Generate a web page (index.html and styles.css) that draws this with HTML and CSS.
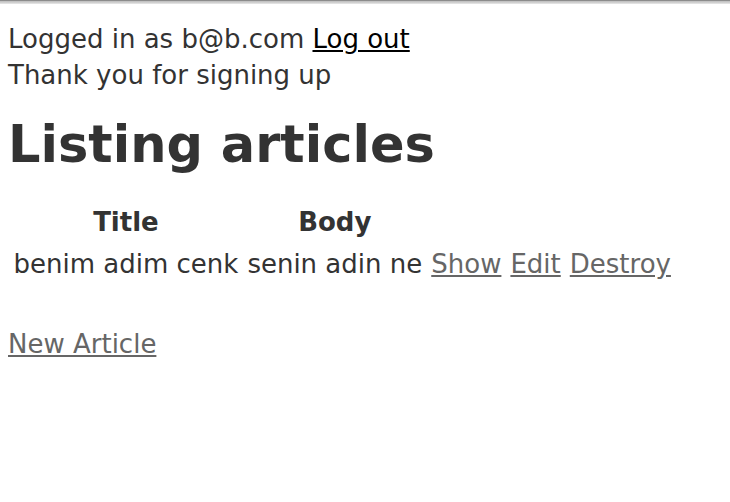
FILE: index.html
```html
<!DOCTYPE html>
<html>
<head>
<meta charset="utf-8">
<link rel="stylesheet" href="styles.css">
</head>
<body>
<div class="chrome"></div>
<div class="page">
  <div class="session">Logged in as b@b.com <a class="logout" href="#">Log out</a></div>
  <div class="notice">Thank you for signing up</div>
  <h1 class="title">Listing articles</h1>
  <table class="articles">
    <tr>
      <th>Title</th>
      <th>Body</th>
      <th></th>
      <th></th>
      <th></th>
    </tr>
    <tr>
      <td>benim adim cenk</td>
      <td>senin adin ne</td>
      <td><a class="visited" href="#">Show</a></td>
      <td><a class="visited" href="#">Edit</a></td>
      <td><a class="visited" href="#">Destroy</a></td>
    </tr>
  </table>
  <br>
  <a class="visited" href="#">New Article</a>
</div>
</body>
</html>
```

FILE: styles.css
```css
html, body {
  margin: 0;
  padding: 0;
  background: #fff;
}
body {
  color: #333;
  font-family: "DejaVu Sans", Verdana, sans-serif;
  font-size: 26px;
  line-height: 36px;
}
.chrome {
  height: 4px;
  background: linear-gradient(#8c8c8c 0, #8c8c8c 1px, #bdbdbd 1px, #d6d6d6 3px, #ececec 4px);
}
.page {
  padding: 17px 8px 0;
}
a {
  color: #000;
  text-decoration: underline;
}
a.visited {
  color: #666;
}
.title {
  font-size: 51px;
  line-height: 60px;
  font-weight: bold;
  margin: 22px 0 25px;
}
.articles {
  border-spacing: 2px;
  border-collapse: separate;
  margin-bottom: 4px;
}
.articles th,
.articles td {
  padding: 2px 3.5px;
  font-size: 26px;
  line-height: 36px;
}
.articles th {
  font-weight: bold;
  text-align: center;
}
```
